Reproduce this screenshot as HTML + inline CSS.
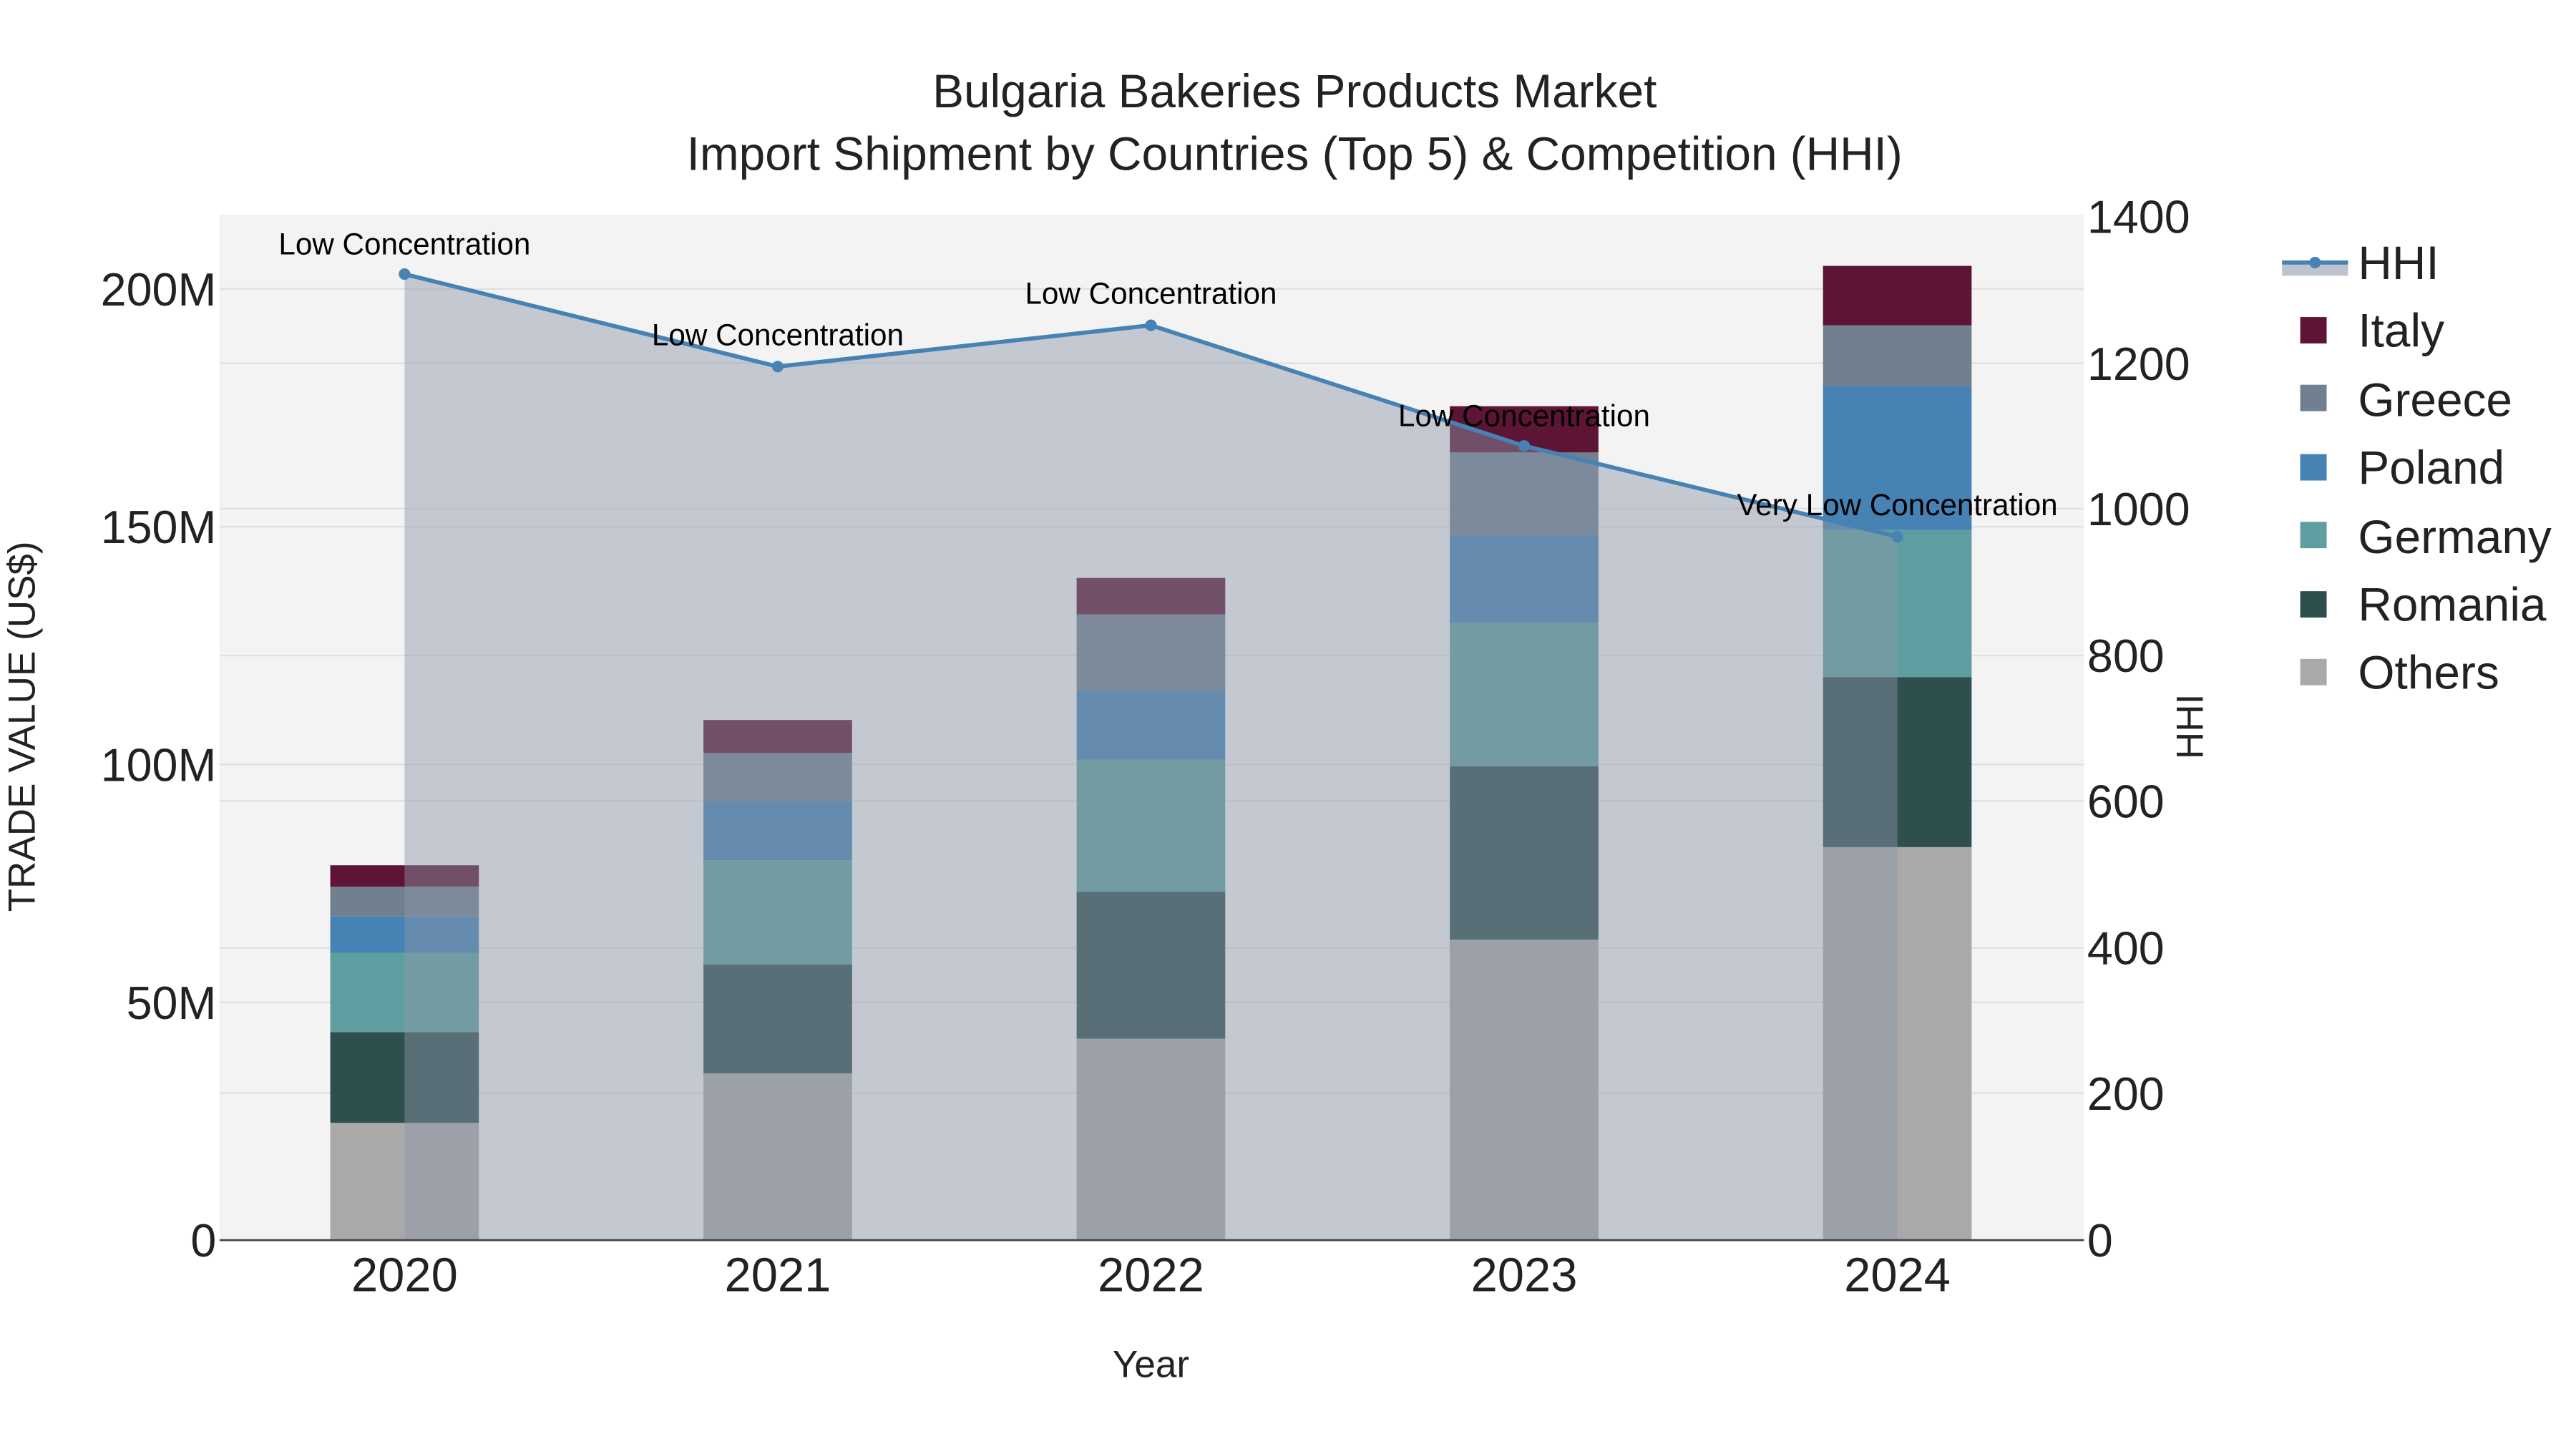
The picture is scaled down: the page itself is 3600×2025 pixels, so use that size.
<!DOCTYPE html>
<html><head><meta charset="utf-8"><style>html,body{margin:0;padding:0;background:#fff}svg{display:block}</style></head>
<body>
<svg width="3600" height="2025" viewBox="0 0 1560 877.5" xmlns="http://www.w3.org/2000/svg" font-family="Liberation Sans, sans-serif">
<rect width="1560" height="877.5" fill="#fff"/>
<rect x="133" y="130" width="1129" height="621" fill="#f3f3f3"/>
<g stroke="#e0e0e0" stroke-width="1">
<line x1="133" x2="1262" y1="607" y2="607"/><line x1="133" x2="1262" y1="463" y2="463"/><line x1="133" x2="1262" y1="319" y2="319"/><line x1="133" x2="1262" y1="175" y2="175"/>
<line x1="133" x2="1262" y1="662" y2="662"/><line x1="133" x2="1262" y1="574" y2="574"/><line x1="133" x2="1262" y1="485" y2="485"/><line x1="133" x2="1262" y1="397" y2="397"/><line x1="133" x2="1262" y1="308" y2="308"/><line x1="133" x2="1262" y1="220" y2="220"/>
</g>
<g>
<rect x="200" y="680" width="90" height="71" fill="#a9a9a9"/><rect x="200" y="625" width="90" height="55" fill="#2f4f4f"/><rect x="200" y="577" width="90" height="48" fill="#5f9ea0"/><rect x="200" y="555" width="90" height="22" fill="#4682b4"/><rect x="200" y="537" width="90" height="18" fill="#708090"/><rect x="200" y="524" width="90" height="13" fill="#5e1535"/>
<rect x="426" y="650" width="90" height="101" fill="#a9a9a9"/><rect x="426" y="584" width="90" height="66" fill="#2f4f4f"/><rect x="426" y="521" width="90" height="63" fill="#5f9ea0"/><rect x="426" y="485" width="90" height="36" fill="#4682b4"/><rect x="426" y="456" width="90" height="29" fill="#708090"/><rect x="426" y="436" width="90" height="20" fill="#5e1535"/>
<rect x="652" y="629" width="90" height="122" fill="#a9a9a9"/><rect x="652" y="540" width="90" height="89" fill="#2f4f4f"/><rect x="652" y="460" width="90" height="80" fill="#5f9ea0"/><rect x="652" y="418" width="90" height="42" fill="#4682b4"/><rect x="652" y="372" width="90" height="46" fill="#708090"/><rect x="652" y="350" width="90" height="22" fill="#5e1535"/>
<rect x="878" y="569" width="90" height="182" fill="#a9a9a9"/><rect x="878" y="464" width="90" height="105" fill="#2f4f4f"/><rect x="878" y="377" width="90" height="87" fill="#5f9ea0"/><rect x="878" y="324" width="90" height="53" fill="#4682b4"/><rect x="878" y="274" width="90" height="50" fill="#708090"/><rect x="878" y="246" width="90" height="28" fill="#5e1535"/>
<rect x="1104" y="513" width="90" height="238" fill="#a9a9a9"/><rect x="1104" y="410" width="90" height="103" fill="#2f4f4f"/><rect x="1104" y="321" width="90" height="89" fill="#5f9ea0"/><rect x="1104" y="234" width="90" height="87" fill="#4682b4"/><rect x="1104" y="197" width="90" height="37" fill="#708090"/><rect x="1104" y="161" width="90" height="36" fill="#5e1535"/>
</g>
<polygon points="245,751 245,166 471,222 697,197 923,270 1149,325 1149,751" fill="rgb(140,150,168)" fill-opacity="0.45"/>
<polyline points="245,166 471,222 697,197 923,270 1149,325" fill="none" stroke="#4682b4" stroke-width="2.5"/>
<g fill="#4682b4"><circle cx="245" cy="166" r="3.5"/><circle cx="471" cy="222" r="3.5"/><circle cx="697" cy="197" r="3.5"/><circle cx="923" cy="270" r="3.5"/><circle cx="1149" cy="325" r="3.5"/></g>
<line x1="133" x2="1262" y1="751" y2="751" stroke="#444" stroke-width="1.2"/>
<g font-size="18.3" fill="#000" text-anchor="middle">
<text x="245" y="154">Low Concentration</text><text x="471" y="209">Low Concentration</text><text x="697" y="184">Low Concentration</text><text x="923" y="258">Low Concentration</text><text x="1149" y="312">Very Low Concentration</text>
</g>
<g font-size="28.5" fill="#222" text-anchor="middle">
<text x="784" y="65">Bulgaria Bakeries Products Market</text>
<text x="784" y="103">Import Shipment by Countries (Top 5) &amp; Competition (HHI)</text>
</g>
<g font-size="28" fill="#222" text-anchor="end">
<text x="131" y="761">0</text><text x="131" y="617">50M</text><text x="131" y="473">100M</text><text x="131" y="329">150M</text><text x="131" y="185">200M</text>
</g>
<g font-size="28" fill="#222" text-anchor="start">
<text x="1264" y="761">0</text><text x="1264" y="672">200</text><text x="1264" y="584">400</text><text x="1264" y="495">600</text><text x="1264" y="407">800</text><text x="1264" y="318">1000</text><text x="1264" y="230">1200</text><text x="1264" y="141">1400</text>
</g>
<g font-size="29" fill="#222" text-anchor="middle">
<text x="245" y="782">2020</text><text x="471" y="782">2021</text><text x="697" y="782">2022</text><text x="923" y="782">2023</text><text x="1149" y="782">2024</text>
</g>
<text x="697" y="834" font-size="23" fill="#222" text-anchor="middle">Year</text>
<text transform="translate(21,440) rotate(-90)" font-size="23" fill="#222" text-anchor="middle">TRADE VALUE (US$)</text>
<text transform="translate(1334,440) rotate(-90)" font-size="23" fill="#222" text-anchor="middle">HHI</text>
<g font-size="28.5" fill="#222">
<rect x="1382" y="159" width="40" height="8" fill="rgb(190,196,206)"/>
<line x1="1382" x2="1422" y1="159" y2="159" stroke="#4682b4" stroke-width="2.5"/><circle cx="1402" cy="159" r="3.5" fill="#4682b4"/>
<text x="1428" y="169">HHI</text>
<rect x="1393" y="192" width="16" height="16" fill="#5e1535"/><text x="1428" y="210">Italy</text>
<rect x="1393" y="233" width="16" height="16" fill="#708090"/><text x="1428" y="252">Greece</text>
<rect x="1393" y="275" width="16" height="16" fill="#4682b4"/><text x="1428" y="293">Poland</text>
<rect x="1393" y="316" width="16" height="16" fill="#5f9ea0"/><text x="1428" y="335">Germany</text>
<rect x="1393" y="358" width="16" height="16" fill="#2f4f4f"/><text x="1428" y="376">Romania</text>
<rect x="1393" y="399" width="16" height="16" fill="#a9a9a9"/><text x="1428" y="417">Others</text>
</g>
</svg>
</body></html>
